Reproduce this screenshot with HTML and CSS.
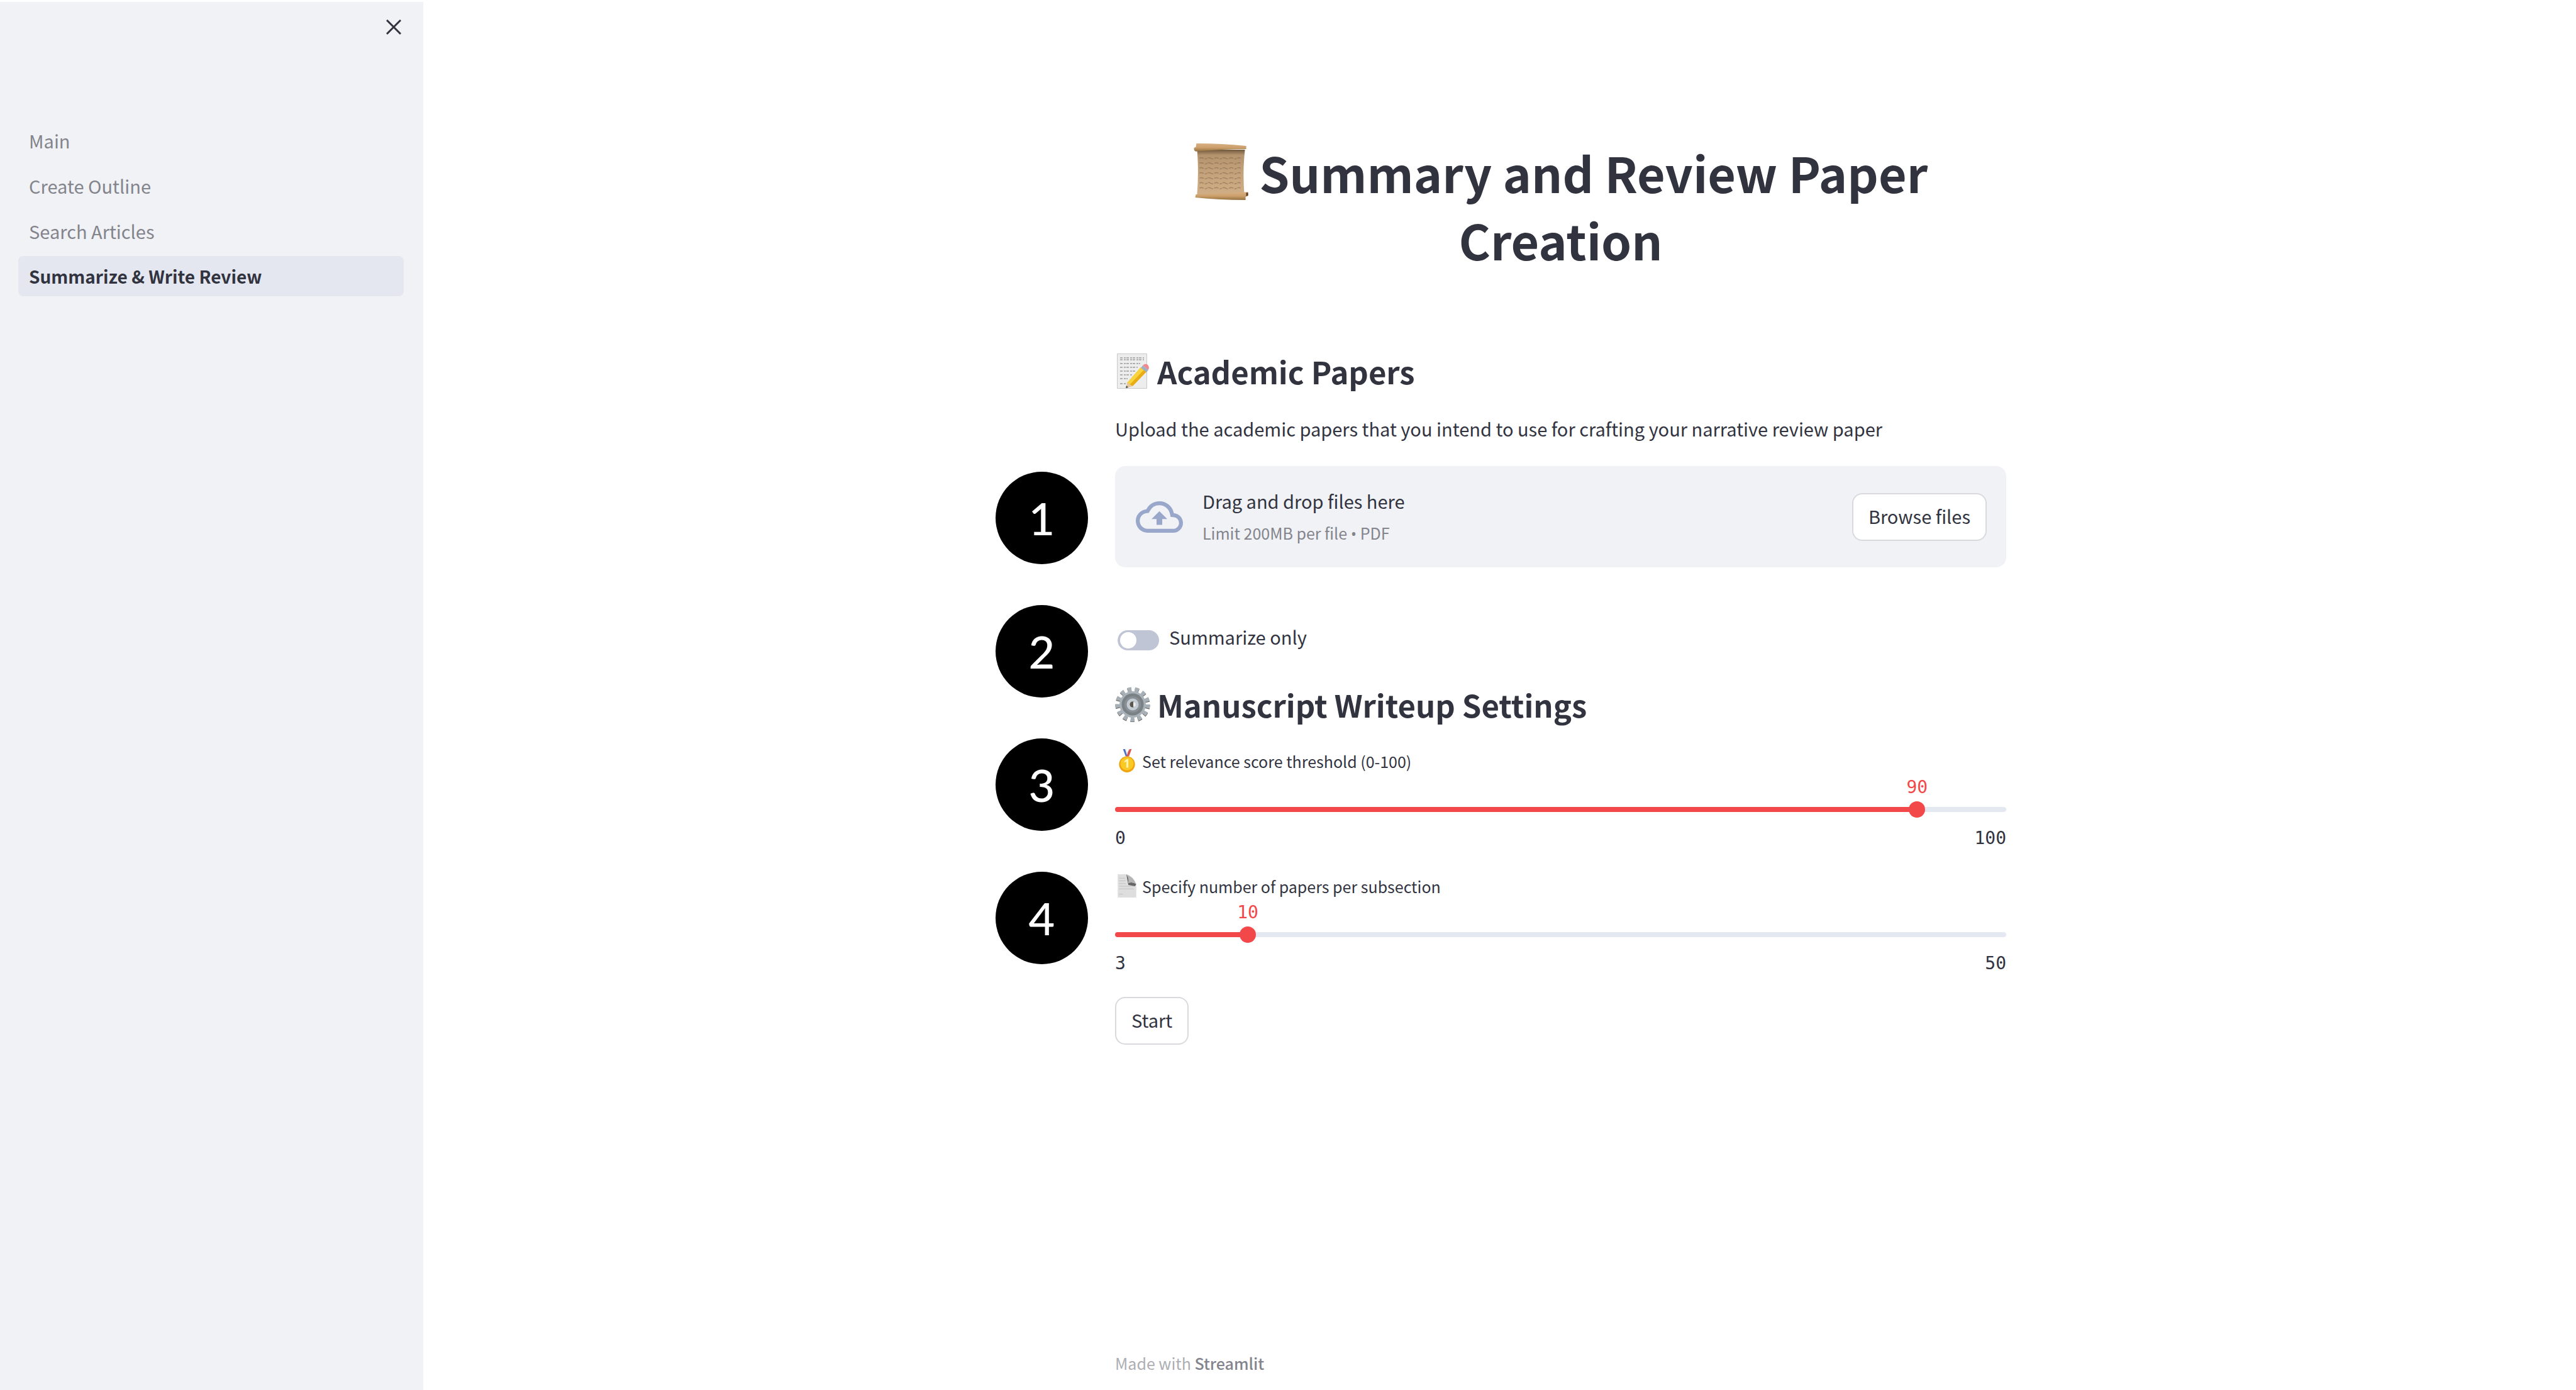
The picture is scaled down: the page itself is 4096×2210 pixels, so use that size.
FILE: index.html
```html
<!DOCTYPE html>
<html lang="en">
<head>
<meta charset="utf-8">
<title>Summary and Review Paper Creation</title>
<link rel="stylesheet" href="styles.css">
</head>
<body>
<div class="app">
  <aside class="sidebar">
    <button class="close" type="button" aria-label="Close sidebar">
      <svg viewBox="0 0 24 24" aria-hidden="true"><path d="M1 1L23 23M23 1L1 23"/></svg>
    </button>
    <nav class="nav">
      <a class="nav-link" href="#main">Main</a>
      <a class="nav-link" href="#outline">Create Outline</a>
      <a class="nav-link" href="#search">Search Articles</a>
      <a class="nav-link nav-link-active" href="#summarize" aria-current="page">Summarize &amp; Write Review</a>
    </nav>
  </aside>

  <div class="steps">
    <span class="step">1</span>
    <span class="step">2</span>
    <span class="step">3</span>
    <span class="step">4</span>
  </div>

  <main class="content">
    <h1 class="title"><svg class="icon-scroll" viewBox="0 0 87 91" aria-hidden="true">
      <defs>
        <linearGradient id="paper" x1="0" y1="0" x2="0" y2="1"><stop offset="0" stop-color="#6f573b"/><stop offset=".12" stop-color="#b3936d"/><stop offset=".5" stop-color="#c3a27b"/><stop offset="1" stop-color="#cfae85"/></linearGradient>
        <linearGradient id="roll" x1="0" y1="0" x2="0" y2="1"><stop offset="0" stop-color="#d8b083"/><stop offset=".5" stop-color="#cda06c"/><stop offset="1" stop-color="#93703f"/></linearGradient>
      </defs>
      <path fill="url(#paper)" d="M5 10H82Q78 45 81 82H5Q8 45 5 10z"/>
      <path stroke="#80664a" stroke-width="1.5" stroke-dasharray="7 2 4 1 9 2" opacity=".55" fill="none" d="M9 24q3-2 6 0t6 0 6 0 6 0 6 0 6 0 6 0 6 0 6 0 6 0 6 0M9 32q3-2 6 0t6 0 6 0 6 0 6 0 6 0 6 0 6 0 6 0 6 0 6 0M9 40q3-2 6 0t6 0 6 0 6 0 6 0 6 0 6 0 6 0 6 0 6 0 6 0M9 48q3-2 6 0t6 0 6 0 6 0 6 0 6 0 6 0 6 0 6 0 6 0 6 0M9 56q3-2 6 0t6 0 6 0 6 0 6 0 6 0 6 0 6 0 6 0 6 0 6 0M9 64q3-2 6 0t6 0 6 0 6 0 6 0 6 0 6 0 6 0 6 0 6 0 6 0M9 72q3-2 6 0t6 0 6 0 6 0 6 0 6 0 6 0 6 0 6 0 6 0 6 0"/>
      <path fill="url(#roll)" d="M4 0Q45 0 84 4V9Q45 9 3 13Q0 12 0 8Q0 6 3 6z"/>
      <path fill="url(#roll)" d="M3 82Q45 81 87 78V84L83 86V91Q40 91 2 87z"/>
      <path fill="#5c3d1e" d="M84 79h3v5l-3 1z"/>
    </svg> Summary and Review Paper Creation</h1>

    <h2 class="heading"><svg class="icon-heading" viewBox="0 0 56 56" aria-hidden="true">
      <path fill="#ededed" stroke="#c9c9c9" d="M3.500.500H50.500V55.500H3.500z"/>
      <path stroke="#9b9b9b" stroke-width="1.500" stroke-dasharray="4 2 3 1" fill="none" d="M8 7H46M8 10H46M8 16H40M8 22H36M8 28H32M8 34H28M8 40H20M8 48H18"/>
      <path fill="#e8ac14" d="M41 22L50 29L28 52L19 47z"/>
      <path fill="#f9d33c" d="M41 22L46 26L24 49L19 47z"/>
      <path fill="#e6c79b" d="M19 46L28 52L18 55z"/><path fill="#444" d="M18 51L21 54L17 55z"/>
      <path fill="#9fb0c2" d="M44 19L53 26L50 30L41 23z"/>
      <path fill="#f0898c" d="M44 19Q48 15 52 18Q55 21 53 26z"/>
    </svg>Academic Papers</h2>
    <p class="text">Upload the academic papers that you intend to use for crafting your narrative review paper</p>

    <section class="dropzone" aria-label="File upload">
      <svg class="icon-cloud" viewBox="0 4 24 16" aria-hidden="true"><path d="M19.350 10.040A7.490 7.490 0 0 0 12 4C9.110 4 6.600 5.640 5.350 8.040A5.994 5.994 0 0 0 0 14c0 3.310 2.690 6 6 6h13c2.760 0 5-2.240 5-5 0-2.640-2.050-4.780-4.650-4.960zM19 18H6c-2.210 0-4-1.790-4-4 0-2.050 1.530-3.760 3.560-3.970l1.070-.110.500-.950A5.469 5.469 0 0 1 12 6c2.620 0 4.880 1.860 5.390 4.430l.300 1.500 1.530.110A2.980 2.980 0 0 1 22 15c0 1.650-1.350 3-3 3zM8 13h2.550v3h2.900v-3H16l-4-4z"/></svg>
      <div class="dropzone-text">
        <span class="dropzone-title">Drag and drop files here</span>
        <small class="dropzone-hint">Limit 200MB per file <span class="bullet">•</span> PDF</small>
      </div>
      <button class="button" type="button">Browse files</button>
    </section>

    <label class="toggle"><input class="switch" type="checkbox"> Summarize only</label>

    <h2 class="heading heading-settings"><svg class="icon-heading" viewBox="0 0 56 56" aria-hidden="true">
      <circle cx="28" cy="29" r="24" fill="none" stroke="#59554f" stroke-width="7" stroke-dasharray="6 5.600"/>
      <circle cx="28" cy="28" r="24" fill="none" stroke="#a7b0b7" stroke-width="7" stroke-dasharray="6 5.600"/>
      <circle cx="28" cy="28" r="21" fill="#a9b2b8"/>
      <circle cx="28" cy="28" r="17.500" fill="#7b8286"/>
      <circle cx="28" cy="28" r="13" fill="#899197"/>
      <circle cx="28" cy="28" r="7" fill="none" stroke="#c3ccd2" stroke-width="5"/>
      <circle cx="28" cy="28" r="4.500" fill="#5d564f"/>
      <path fill="#e8ecee" d="M29 24a4 4 0 0 1 0 8z"/>
    </svg>Manuscript Writeup Settings</h2>

    <div class="field">
      <label class="field-label" for="threshold"><svg class="icon-label" viewBox="0 0 36 36" aria-hidden="true">
        <path fill="#4a6fc4" d="M12 0h4l4 11h-4z"/><path fill="#d8574f" d="M25 0h-4l-4 11h4z"/><path fill="#eee" d="M15 0h2l2 6-1 3zM22 0h-2l-2 6z"/>
        <circle cx="18" cy="23" r="12" fill="#eda40e"/><circle cx="18" cy="22" r="10" fill="#fbc926"/>
        <path fill="#fff3b0" d="M14 18l4-3h2v13h-3v-9l-3 1z"/>
      </svg>Set relevance score threshold (0-100)</label>
      <div class="slider" style="--position: 90%">
        <output class="slider-value" for="threshold">90</output>
        <div class="slider-bar"><span class="slider-rail"></span><input class="slider-input" id="threshold" type="range" min="0" max="100" value="90"></div>
        <div class="slider-ticks"><span>0</span><span>100</span></div>
      </div>
    </div>

    <div class="field">
      <label class="field-label" for="papers"><svg class="icon-label" viewBox="0 0 36 36" aria-hidden="true">
        <path fill="#dedede" d="M4 0H17L32 15V35H4z"/>
        <path stroke="#c2c2c2" fill="none" d="M6 6H15M6 10H16M6 14H16M6 18H28M6 22H28M6 30H12"/>
        <path fill="#666" d="M17 0Q22 7 20 13Q27 11 32 15L30 18L20 16z"/><path fill="#b5b5b5" d="M17 0Q27 3 32 15Q27 11 20 13Q22 7 17 0z"/>
      </svg>Specify number of papers per subsection</label>
      <div class="slider" style="--position: 14.890%">
        <output class="slider-value" for="papers">10</output>
        <div class="slider-bar"><span class="slider-rail"></span><input class="slider-input" id="papers" type="range" min="3" max="50" value="10"></div>
        <div class="slider-ticks"><span>3</span><span>50</span></div>
      </div>
    </div>

    <button class="button button-start" type="button">Start</button>

    <footer class="footer">Made with <a class="footer-link" href="https://streamlit.io">Streamlit</a></footer>
  </main>
</div>
</body>
</html>
```
FILE: styles.css
```css
:root {
  --text: #31333f;
  --muted: #83848c;
  --panel: #f0f2f6;
  --accent: #f3484a;
  --rail: #e4e8f0;
  --sans: "Noto Sans CJK SC", "Noto Sans", sans-serif;
  --mono: "DejaVu Sans Mono", monospace;
}

* { box-sizing: border-box; }

body {
  margin: 0;
  background: #fff;
  color: var(--text);
  font: 29px/48px var(--sans);
}

button, input { margin: 0; font: inherit; color: inherit; }
a { color: inherit; text-decoration: none; }

.app {
  display: grid;
  grid-template-columns: 673px 1100fr minmax(0, 1417px) 906fr;
  min-height: 100vh;
}

.sidebar {
  display: flex;
  flex-direction: column;
  margin-top: 3px;
  padding: 20px 31px 0 29px;
  background: var(--panel);
}

.close {
  display: flex;
  align-self: flex-end;
  align-items: center;
  justify-content: center;
  width: 40px;
  height: 40px;
  margin-right: -4px;
  padding: 0;
  border: 0;
  background: none;
}

.close svg {
  width: 24px;
  height: 24px;
  fill: none;
  stroke: var(--text);
  stroke-width: 3;
}

.nav {
  display: flex;
  flex-direction: column;
  gap: 8px;
  margin-top: 128px;
}

.nav-link {
  padding: 8px 17px;
  border-radius: 8px;
  color: var(--muted);
}

.nav-link-active {
  background: #e4e7f0;
  color: var(--text);
  font-size: 28px;
  font-weight: 700;
}

.steps {
  display: flex;
  flex-direction: column;
  align-items: flex-end;
  gap: 65px;
  padding: 750px 43px 0 0;
}

.step {
  width: 147px;
  height: 147px;
  border-radius: 50%;
  background: #000;
  color: #fff;
  font: 500 72px/147px Lato, sans-serif;
  text-align: center;
}

.content {
  display: flex;
  flex-direction: column;
  padding: 220px 0 23px;
}

.title {
  margin: 0;
  font-size: 77px;
  line-height: 107px;
  font-weight: 700;
  text-align: center;
}

.icon-scroll {
  width: 87px;
  height: 90px;
  vertical-align: -11px;
}

.heading {
  display: flex;
  align-items: center;
  gap: 11px;
  margin: 126px 0 0;
  font-size: 49px;
  line-height: 60px;
  font-weight: 700;
}

.heading-settings { margin-top: 54px; }
.icon-heading { width: 56px; height: 56px; }

.text { margin: 37px 0 36px; }

.dropzone {
  display: flex;
  align-items: center;
  padding: 30px 31px 30px 33px;
  min-height: 161px;
  border-radius: 16px;
  background: var(--panel);
}

.icon-cloud {
  width: 75px;
  height: 50px;
  margin-right: 31px;
  fill: #98a7ca;
}

.dropzone-text {
  display: flex;
  flex: 1;
  flex-direction: column;
  gap: 3px;
}

.dropzone-hint {
  color: var(--muted);
  font-size: 25px;
}

.bullet { font-family: "Open Sans", sans-serif; }

.button {
  height: 76px;
  padding: 0 24px 4px;
  border: 2px solid #d9dadd;
  border-radius: 16px;
  background: #fff;
}

.button-start {
  align-self: flex-start;
  margin-top: 37px;
}

.toggle {
  display: flex;
  align-items: flex-end;
  gap: 16px;
  margin: 86px 0 0 4px;
}

.switch {
  appearance: none;
  width: 66px;
  height: 32px;
  margin-bottom: 2px;
  padding: 3px 4px;
  border-radius: 16px;
  background: #bfc5d5;
}

.switch::before {
  content: "";
  display: block;
  width: 26px;
  height: 26px;
  border-radius: 50%;
  background: #fff;
}

.switch:checked::before { margin-left: auto; }

.field { margin-top: 40px; }

.field-label {
  display: flex;
  align-items: center;
  gap: 5px;
  font-size: 25px;
  line-height: 40px;
}

.icon-label { width: 38px; height: 38px; }

.slider {
  padding-top: 6px;
  font: 28px/32px var(--mono);
}

.slider-value {
  display: block;
  width: 80px;
  margin-left: calc(var(--position) - 40px);
  color: var(--accent);
  text-align: center;
}

.slider-bar {
  position: relative;
  height: 26px;
  margin: 6px 0 17px;
}

.slider-rail {
  position: absolute;
  inset: 9px 0;
  border-radius: 4px;
  background: linear-gradient(to right, var(--accent) var(--position), var(--rail) var(--position));
}

.slider-input {
  position: relative;
  appearance: none;
  display: block;
  width: calc(100% + 26px);
  height: 26px;
  margin: 0 -13px;
  background: none;
}

.slider-input::-webkit-slider-thumb {
  appearance: none;
  width: 26px;
  height: 26px;
  border-radius: 50%;
  background: var(--accent);
}

.slider-ticks {
  display: flex;
  justify-content: space-between;
}

.footer {
  margin-top: auto;
  color: #adaeb3;
  font-size: 25px;
  line-height: 40px;
}

.footer-link { color: var(--muted); font-weight: 500; }
```
